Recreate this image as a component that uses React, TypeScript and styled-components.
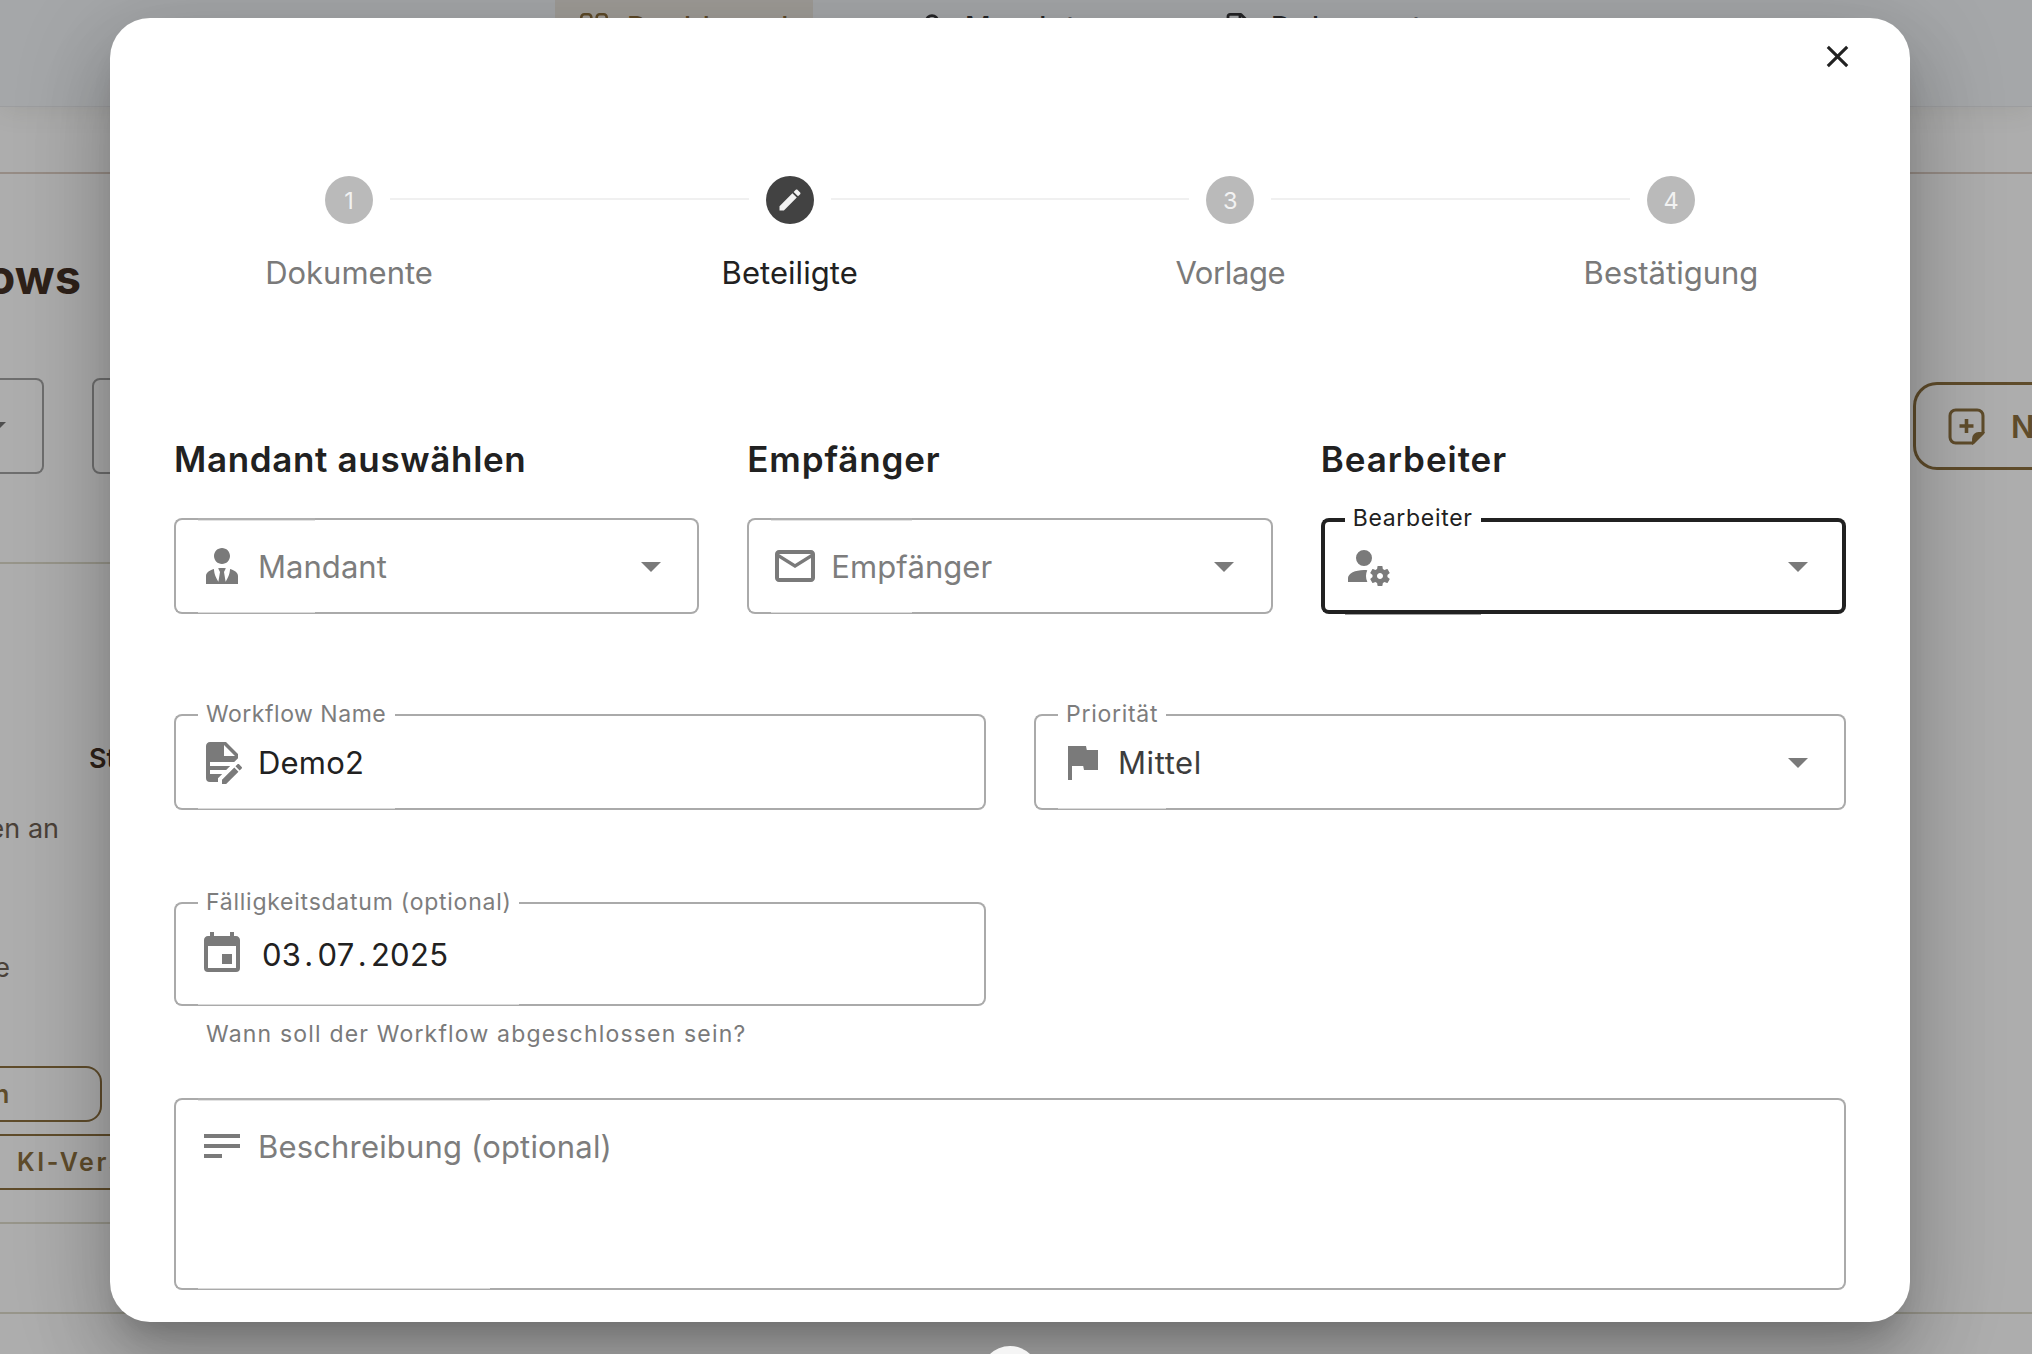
import React from "react";
import styled, { createGlobalStyle, css } from "styled-components";

const GlobalStyle = createGlobalStyle`
  *, *::before, *::after { box-sizing: border-box; }
  html, body { margin: 0; padding: 0; overflow: hidden; }
  body { font-family: Inter, Roboto, "Liberation Sans", sans-serif; color: #212121; }
  svg { display: block; flex: none; }
`;

/* ---------- icons ---------- */

const paths = {
  accountTie:
    "M12 3C14.21 3 16 4.79 16 7S14.21 11 12 11 8 9.21 8 7 9.79 3 12 3M16 13.54C16 14.6 15.72 17.07 13.81 19.83L13 15L13.94 13.12C13.32 13.05 12.67 13 12 13S10.68 13.05 10.06 13.12L11 15L10.19 19.83C8.28 17.07 8 14.6 8 13.54C5.61 14.24 4 15.5 4 17V21H20V17C20 15.5 18.4 14.24 16 13.54Z",
  email:
    "M22 6C22 4.9 21.1 4 20 4H4C2.9 4 2 4.9 2 6V18C2 19.1 2.9 20 4 20H20C21.1 20 22 19.1 22 18V6M20 6L12 11L4 6H20M20 18H4V8L12 13L20 8V18Z",
  accountCog:
    "M10 4A4 4 0 0 0 6 8A4 4 0 0 0 10 12A4 4 0 0 0 14 8A4 4 0 0 0 10 4M17 12C16.87 12 16.76 12.09 16.74 12.21L16.55 13.53C16.25 13.66 15.96 13.82 15.7 14L14.46 13.5C14.35 13.5 14.22 13.5 14.15 13.63L13.15 15.36C13.09 15.47 13.11 15.6 13.21 15.68L14.27 16.5C14.25 16.67 14.24 16.83 14.24 17C14.24 17.17 14.25 17.33 14.27 17.5L13.21 18.32C13.12 18.4 13.09 18.53 13.15 18.64L14.15 20.37C14.21 20.5 14.34 20.5 14.46 20.5L15.7 20C15.96 20.18 16.24 20.35 16.55 20.47L16.74 21.79C16.76 21.91 16.86 22 17 22H19C19.11 22 19.22 21.91 19.24 21.79L19.43 20.47C19.73 20.34 20 20.18 20.27 20L21.5 20.5C21.63 20.5 21.76 20.5 21.83 20.37L22.83 18.64C22.89 18.53 22.86 18.4 22.77 18.32L21.7 17.5C21.72 17.33 21.74 17.17 21.74 17C21.74 16.83 21.73 16.67 21.7 16.5L22.76 15.68C22.85 15.6 22.88 15.47 22.82 15.36L21.82 13.63C21.76 13.5 21.63 13.5 21.5 13.5L20.27 14C20 13.82 19.73 13.65 19.42 13.53L19.23 12.21C19.22 12.09 19.11 12 19 12H17M10 14C5.58 14 2 15.79 2 18V20H11.68A7 7 0 0 1 11 17A7 7 0 0 1 11.64 14.09C11.11 14.03 10.56 14 10 14M18 15.5C18.83 15.5 19.5 16.17 19.5 17C19.5 17.83 18.83 18.5 18 18.5C17.16 18.5 16.5 17.83 16.5 17C16.5 16.17 17.17 15.5 18 15.5Z",
  documentEdit:
    "M6,2C4.89,2 4,2.89 4,4V20A2,2 0 0,0 6,22H10V20.09L12.09,18H6V16H14.09L16.09,14H6V12H18.09L20,10.09V8L14,2H6M13,3.5L18.5,9H13V3.5M20.15,13C20,13 19.86,13.05 19.75,13.16L18.73,14.18L20.82,16.26L21.84,15.25C22.05,15.03 22.05,14.67 21.84,14.46L20.54,13.16C20.43,13.05 20.29,13 20.15,13M18.14,14.77L12,20.92V23H14.08L20.23,16.85L18.14,14.77Z",
  flag: "M14.4,6L14,4H5V21H7V14H12.6L13,16H20V6H14.4Z",
  calendar:
    "M19,19H5V8H19M16,1V3H8V1H6V3H5C3.89,3 3,3.89 3,5V19A2,2 0 0,0 5,21H19A2,2 0 0,0 21,19V5C21,3.89 20.1,3 19,3H18V1M17,12H12V17H17V12Z",
  text: "M21,6V8H3V6H21M3,18H12V16H3V18M3,13H21V11H3V13Z",
  pencil:
    "M20.71,7.04C21.1,6.65 21.1,6 20.71,5.63L18.37,3.29C18,2.9 17.35,2.9 16.96,3.29L15.12,5.12L18.87,8.87M3,17.25V21H6.75L17.81,9.93L14.06,6.18L3,17.25Z",
  close:
    "M19,6.41L17.59,5L12,10.59L6.41,5L5,6.41L10.59,12L5,17.59L6.41,19L12,13.41L17.59,19L19,17.59L13.41,12L19,6.41Z",
  menuDown: "M7,10L12,15L17,10H7Z",
};

const Icon = ({ name, size = 48 }: { name: keyof typeof paths; size?: number }) => (
  <svg width={size} height={size} viewBox="0 0 24 24" fill="currentColor">
    <path d={paths[name]} />
  </svg>
);

const GridIcon = () => (
  <svg width="32" height="32" viewBox="0 0 32 32" fill="none" stroke="currentColor" strokeWidth="2.6">
    <rect x="3.3" y="3.3" width="10" height="10" rx="3" />
    <rect x="18.7" y="3.3" width="10" height="10" rx="3" />
    <rect x="3.3" y="18.7" width="10" height="10" rx="3" />
    <rect x="18.7" y="18.7" width="10" height="10" rx="3" />
  </svg>
);

const PersonIcon = () => (
  <svg width="32" height="32" viewBox="0 0 32 32" fill="none" stroke="currentColor" strokeWidth="2.8">
    <circle cx="16" cy="10.4" r="5.8" />
    <path d="M5 28c0-6 5-8 11-8s11 2 11 8z" />
  </svg>
);

const FileIcon = () => (
  <svg width="32" height="32" viewBox="0 0 32 32" fill="none" stroke="currentColor" strokeWidth="2.8" strokeLinejoin="round">
    <path d="M8 3.4h11l7 7V27a2 2 0 0 1-2 2H9a3 3 0 0 1-3-3V5.4a2 2 0 0 1 2-2z" />
    <path d="M18 4v7h7" />
  </svg>
);

const NotePlusIcon = () => (
  <svg width="43" height="43" viewBox="0 0 24 24" fill="none" stroke="currentColor" strokeWidth="1.7">
    <path d="M15.6 21.2H6A3.2 3.2 0 0 1 2.8 18V6A3.2 3.2 0 0 1 6 2.8h12A3.2 3.2 0 0 1 21.2 6v9.6z" strokeLinejoin="round" />
    <path d="M15.6 21.2v-2.4a3.2 3.2 0 0 1 3.2-3.2h2.4z" fill="currentColor" strokeWidth="1" />
    <path d="M12 7.8v7.8M8.1 11.7h7.8" strokeWidth="2" />
  </svg>
);

/* ---------- page behind the dialog ---------- */

const Page = styled.div`
  position: relative;
  width: 2032px;
  height: 1354px;
  overflow: hidden;
  background: #fff;
`;

const TopBar = styled.header`
  height: 107px;
  padding-left: 555px;
  display: flex;
  align-items: flex-start;
  background: #f4f6f9;
  border-bottom: 1px solid #e6e7ea;
  box-shadow: 0 4px 24px rgba(80, 75, 50, 0.1);
`;

const NavItem = styled.div<{ $active?: boolean; $width: number }>`
  width: ${(p) => p.$width}px;
  height: 54px;
  padding-left: 23px;
  display: flex;
  align-items: center;
  gap: 17px;
  font-size: 28px;
  font-weight: 500;
  letter-spacing: 1.9px;
  color: ${(p) => (p.$active ? "#8a6c3c" : "#35363a")};
  background: ${(p) => (p.$active ? "#eae6df" : "transparent")};
`;

const NavSpacer = styled.div`
  width: 80px;
`;

const Content = styled.main`
  padding-top: 65px;
`;

const Rule = styled.hr<{ $tone?: "warm"; $top?: number; $width?: string }>`
  height: 2px;
  width: ${(p) => p.$width ?? "100%"};
  margin: ${(p) => p.$top ?? 0}px 0 0;
  border: 0;
  background: ${(p) => (p.$tone === "warm" ? "#ddcec4" : "#dfdccc")};
`;

const TitleRow = styled.div`
  height: 204px;
  width: 81px;
  padding-top: 75px;
  display: flex;
  justify-content: flex-end;
  font-size: 47px;
  line-height: 56px;
  font-weight: 700;
  color: #443226;
`;

const FilterRow = styled.div`
  height: 96px;
  display: flex;
  align-items: center;
`;

const FilterSelect = styled.div<{ $edge: "end" | "start" }>`
  height: 96px;
  width: ${(p) => (p.$edge === "end" ? 44 : 200)}px;
  border: 2px solid #a2a2a2;
  color: #737373;
  display: flex;
  align-items: center;
  justify-content: flex-end;
  ${(p) =>
    p.$edge === "end"
      ? css`
          border-left: 0;
          border-radius: 0 8px 8px 0;
          padding-right: 22px;
        `
      : css`
          margin-left: 48px;
          border-radius: 8px 0 0 8px;
        `}
`;

const NewButton = styled.div`
  margin-left: auto;
  width: 119px;
  height: 88px;
  padding-left: 29px;
  border: 3px solid #8c7040;
  border-right: 0;
  border-radius: 24px 0 0 24px;
  display: flex;
  align-items: center;
  gap: 23px;
  overflow: hidden;
  white-space: nowrap;
  font-size: 31px;
  font-weight: 600;
  color: #8c7040;
`;

const TableArea = styled.div`
  width: 110px;
  overflow: hidden;
  white-space: nowrap;
  color: #6e6154;
  font-size: 27px;
  line-height: 40px;
`;

const TableHeadCell = styled.div`
  margin-top: 175px;
  padding-left: 89px;
  font-weight: 600;
  color: #443226;
`;

const TableCell = styled.div<{ $top: number; $right: number }>`
  margin-top: ${(p) => p.$top}px;
  height: 40px;
  width: ${(p) => p.$right}px;
  display: flex;
  justify-content: flex-end;
`;

const Chip = styled.div<{ $width: number; $top: number; $open?: boolean }>`
  margin-top: ${(p) => p.$top}px;
  height: 56px;
  width: ${(p) => p.$width}px;
  padding-left: ${(p) => (p.$open ? 17 : 0)}px;
  padding-right: ${(p) => (p.$open ? 0 : 88)}px;
  display: flex;
  align-items: center;
  justify-content: ${(p) => (p.$open ? "flex-start" : "flex-end")};
  border: 2px solid #8c7040;
  border-left: 0;
  border-right-width: ${(p) => (p.$open ? 0 : 2)}px;
  border-radius: ${(p) => (p.$open ? 0 : "0 16px 16px 0")};
  font-size: 25px;
  font-weight: 600;
  letter-spacing: 2.6px;
  color: #8c7040;
`;

/* ---------- dialog ---------- */

const Scrim = styled.div`
  position: absolute;
  inset: 0;
  background: rgba(0, 0, 0, 0.32);
`;

const FloatingKnob = styled.div`
  position: absolute;
  left: 981px;
  top: 1346px;
  width: 58px;
  height: 58px;
  border-radius: 50%;
  background: #f5f5f5;
`;

const Dialog = styled.section`
  position: absolute;
  left: 110px;
  top: 18px;
  width: 1800px;
  height: 1304px;
  padding: 20px 64px 0;
  border-radius: 40px;
  background: #fff;
  box-shadow: 0 22px 30px -14px rgba(0, 0, 0, 0.2), 0 48px 76px 6px rgba(0, 0, 0, 0.14),
    0 18px 92px 16px rgba(0, 0, 0, 0.12);
`;

const DialogHeader = styled.div`
  height: 37px;
  display: flex;
  justify-content: flex-end;
`;

const CloseButton = styled.div`
  margin-right: -10px;
  color: #212121;
`;

const Stepper = styled.ol`
  list-style: none;
  margin: 101px -45.3px 0;
  padding: 0;
  display: grid;
  grid-template-columns: repeat(4, 1fr);
`;

const Step = styled.li`
  display: flex;
  flex-direction: column;
`;

const StepTrack = styled.div`
  display: flex;
  align-items: center;
`;

const StepLine = styled.div<{ $hidden?: boolean }>`
  flex: 1;
  height: 2px;
  margin-top: -2px;
  background: ${(p) => (p.$hidden ? "transparent" : "#f0f0f0")};
`;

const StepDot = styled.div<{ $active?: boolean }>`
  width: 48px;
  height: 48px;
  margin: 0 17px;
  border-radius: 50%;
  display: flex;
  align-items: center;
  justify-content: center;
  font-size: 23.5px;
  color: #f2f2f2;
  background: ${(p) => (p.$active ? "#424242" : "#bababa")};
`;

const StepLabel = styled.div<{ $active?: boolean; $spacing: number }>`
  margin-top: 29px;
  text-align: center;
  font-size: 31px;
  line-height: 40px;
  letter-spacing: ${(p) => p.$spacing}px;
  color: ${(p) => (p.$active ? "#212121" : "#7a7a7a")};
`;

const FormRow = styled.div<{ $columns: number; $top: number }>`
  margin-top: ${(p) => p.$top}px;
  display: grid;
  grid-template-columns: repeat(${(p) => p.$columns}, 1fr);
  column-gap: 48px;
`;

const Heading = styled.h2<{ $spacing: number }>`
  margin: 0 0 39px;
  font-size: 35px;
  line-height: 40px;
  font-weight: 600;
  letter-spacing: ${(p) => p.$spacing}px;
  color: #212121;
`;

const FieldBox = styled.div<{ $height: number }>`
  display: grid;
  height: ${(p) => p.$height}px;
  > * {
    grid-area: 1 / 1;
  }
`;

const Outline = styled.div<{ $focused?: boolean }>`
  --line: ${(p) => (p.$focused ? "#212121" : "#aaaaaa")};
  --weight: ${(p) => (p.$focused ? 4 : 2)}px;
  display: flex;
`;

const OutlineStart = styled.div`
  width: 24px;
  border: var(--weight) solid var(--line);
  border-right: 0;
  border-radius: 8px 0 0 8px;
`;

const OutlineNotch = styled.div<{ $width: number; $open: boolean; $focused?: boolean }>`
  width: ${(p) => p.$width}px;
  padding-left: 8px;
  display: flex;
  border-bottom: ${(p) => (p.$focused ? "4px solid #212121" : "1px solid #aaaaaa")};
  box-shadow: ${(p) => (p.$focused ? "0 1px 0 #a0a0a0" : "inset 0 -1px 0 #dadada")};
  ${(p) =>
    !p.$open &&
    css`
      border-top: 2px solid #b0b0b0;
      box-shadow: inset 0 -1px 0 #dadada, inset 0 1px 0 #e2e2e2;
    `}
`;

const OutlineEnd = styled.div`
  flex: 1;
  border: var(--weight) solid var(--line);
  border-left: 0;
  border-radius: 0 8px 8px 0;
`;

const FloatingLabel = styled.span<{ $spacing: number; $focused?: boolean }>`
  margin-top: -12px;
  height: 24px;
  font-size: 23px;
  line-height: 24px;
  white-space: nowrap;
  letter-spacing: ${(p) => p.$spacing}px;
  color: ${(p) => (p.$focused ? "#212121" : "#7d7d7d")};
`;

const Control = styled.div<{ $height: number }>`
  height: ${(p) => p.$height}px;
  padding: 0 24.2px 0 23.8px;
  display: flex;
  align-items: center;
  color: #7a7a7a;
`;

const ControlText = styled.span<{ $color?: string; $spacing: number }>`
  margin-left: 12.2px;
  padding-top: 2px;
  font-size: 31px;
  line-height: 40px;
  white-space: nowrap;
  letter-spacing: ${(p) => p.$spacing}px;
  color: ${(p) => p.$color ?? "#7d7d7d"};
`;

const DateValue = styled.span`
  margin-left: 16.2px;
  padding-top: 2px;
  font-size: 31px;
  line-height: 40px;
  letter-spacing: 0.3px;
  color: #212121;
`;

const DateDot = styled.span`
  margin: 0 4px 0 3px;
`;

const Caret = styled.span`
  margin-left: auto;
  color: #7a7a7a;
`;

const Hint = styled.p`
  margin: 14px 0 0 32px;
  font-size: 23px;
  line-height: 28px;
  letter-spacing: 1.18px;
  color: #7a7a7a;
`;

type FieldProps = {
  icon: keyof typeof paths;
  notch: number;
  label?: string;
  labelSpacing?: number;
  focused?: boolean;
  dropdown?: boolean;
  height?: number;
  controlHeight?: number;
  children?: React.ReactNode;
};

const Field = ({ icon, notch, label, labelSpacing = 0.6, focused, dropdown, height = 96, controlHeight, children }: FieldProps) => (
  <FieldBox $height={height}>
    <Outline $focused={focused}>
      <OutlineStart />
      <OutlineNotch $width={notch} $open={!!label} $focused={focused}>
        {label && (
          <FloatingLabel $spacing={labelSpacing} $focused={focused}>
            {label}
          </FloatingLabel>
        )}
      </OutlineNotch>
      <OutlineEnd />
    </Outline>
    <Control $height={controlHeight ?? height}>
      <Icon name={icon} />
      {children}
      {dropdown && (
        <Caret>
          <Icon name="menuDown" />
        </Caret>
      )}
    </Control>
  </FieldBox>
);

const steps = [
  { label: "Dokumente", spacing: 0 },
  { label: "Beteiligte", spacing: 0.05 },
  { label: "Vorlage", spacing: -0.4 },
  { label: "Bestätigung", spacing: 0 },
];
const activeStep = 1;

export default function App() {
  return (
    <>
      <GlobalStyle />
      <Page>
        <TopBar>
          <NavItem $active $width={258}>
            <GridIcon />
            Dashboard
          </NavItem>
          <NavSpacer />
          <NavItem $width={306}>
            <PersonIcon />
            Mandate
          </NavItem>
          <NavItem $width={300}>
            <FileIcon />
            Dokumente
          </NavItem>
        </TopBar>
        <Content>
          <Rule $tone="warm" />
          <TitleRow>Workflows</TitleRow>
          <FilterRow>
            <FilterSelect $edge="end">
              <Icon name="menuDown" />
            </FilterSelect>
            <FilterSelect $edge="start" />
            <NewButton>
              <NotePlusIcon />
              Neuer Workflow
            </NewButton>
          </FilterRow>
          <Rule $top={88} $width="50%" />
          <TableArea>
            <TableHeadCell>Status</TableHeadCell>
            <TableCell $top={30} $right={59}>
              en an
            </TableCell>
            <TableCell $top={99} $right={10}>
              e
            </TableCell>
            <Chip $width={102} $top={78}>
              n
            </Chip>
            <Chip $width={110} $top={12} $open>
              KI-Vers
            </Chip>
          </TableArea>
          <Rule $top={32} $width="50%" />
          <Rule $top={88} />
        </Content>
        <Scrim />
        <Dialog>
          <DialogHeader>
            <CloseButton>
              <Icon name="close" size={37} />
            </CloseButton>
          </DialogHeader>
          <Stepper>
            {steps.map((step, i) => (
              <Step key={step.label}>
                <StepTrack>
                  <StepLine $hidden={i === 0} />
                  <StepDot $active={i === activeStep}>
                    {i === activeStep ? <Icon name="pencil" size={28} /> : i + 1}
                  </StepDot>
                  <StepLine $hidden={i === steps.length - 1} />
                </StepTrack>
                <StepLabel $active={i === activeStep} $spacing={step.spacing}>
                  {step.label}
                </StepLabel>
              </Step>
            ))}
          </Stepper>
          <FormRow $columns={3} $top={146}>
            <div>
              <Heading $spacing={0.66}>Mandant auswählen</Heading>
              <Field icon="accountTie" notch={117} dropdown>
                <ControlText $spacing={0.05}>Mandant</ControlText>
              </Field>
            </div>
            <div>
              <Heading $spacing={0.84}>Empfänger</Heading>
              <Field icon="email" notch={141} dropdown>
                <ControlText $spacing={0.08}>Empfänger</ControlText>
              </Field>
            </div>
            <div>
              <Heading $spacing={0.95}>Bearbeiter</Heading>
              <Field icon="accountCog" notch={136} label="Bearbeiter" labelSpacing={0.69} focused dropdown />
            </div>
          </FormRow>
          <FormRow $columns={2} $top={100}>
            <Field icon="documentEdit" notch={197} label="Workflow Name" labelSpacing={0.52}>
              <ControlText $color="#212121" $spacing={0.2}>
                Demo2
              </ControlText>
            </Field>
            <Field icon="flag" notch={108} label="Priorität" labelSpacing={0.72} dropdown>
              <ControlText $color="#3d3d3d" $spacing={0.6}>
                Mittel
              </ControlText>
            </Field>
          </FormRow>
          <FormRow $columns={2} $top={92}>
            <div>
              <Field icon="calendar" notch={321} label="Fälligkeitsdatum (optional)" labelSpacing={0.75} height={104}>
                <DateValue>
                  03<DateDot>.</DateDot>07<DateDot>.</DateDot>2025
                </DateValue>
              </Field>
              <Hint>Wann soll der Workflow abgeschlossen sein?</Hint>
            </div>
          </FormRow>
          <FormRow $columns={1} $top={50}>
            <Field icon="text" notch={292} height={192} controlHeight={96}>
              <ControlText $spacing={0.17}>Beschreibung (optional)</ControlText>
            </Field>
          </FormRow>
        </Dialog>
        <FloatingKnob />
      </Page>
    </>
  );
}
